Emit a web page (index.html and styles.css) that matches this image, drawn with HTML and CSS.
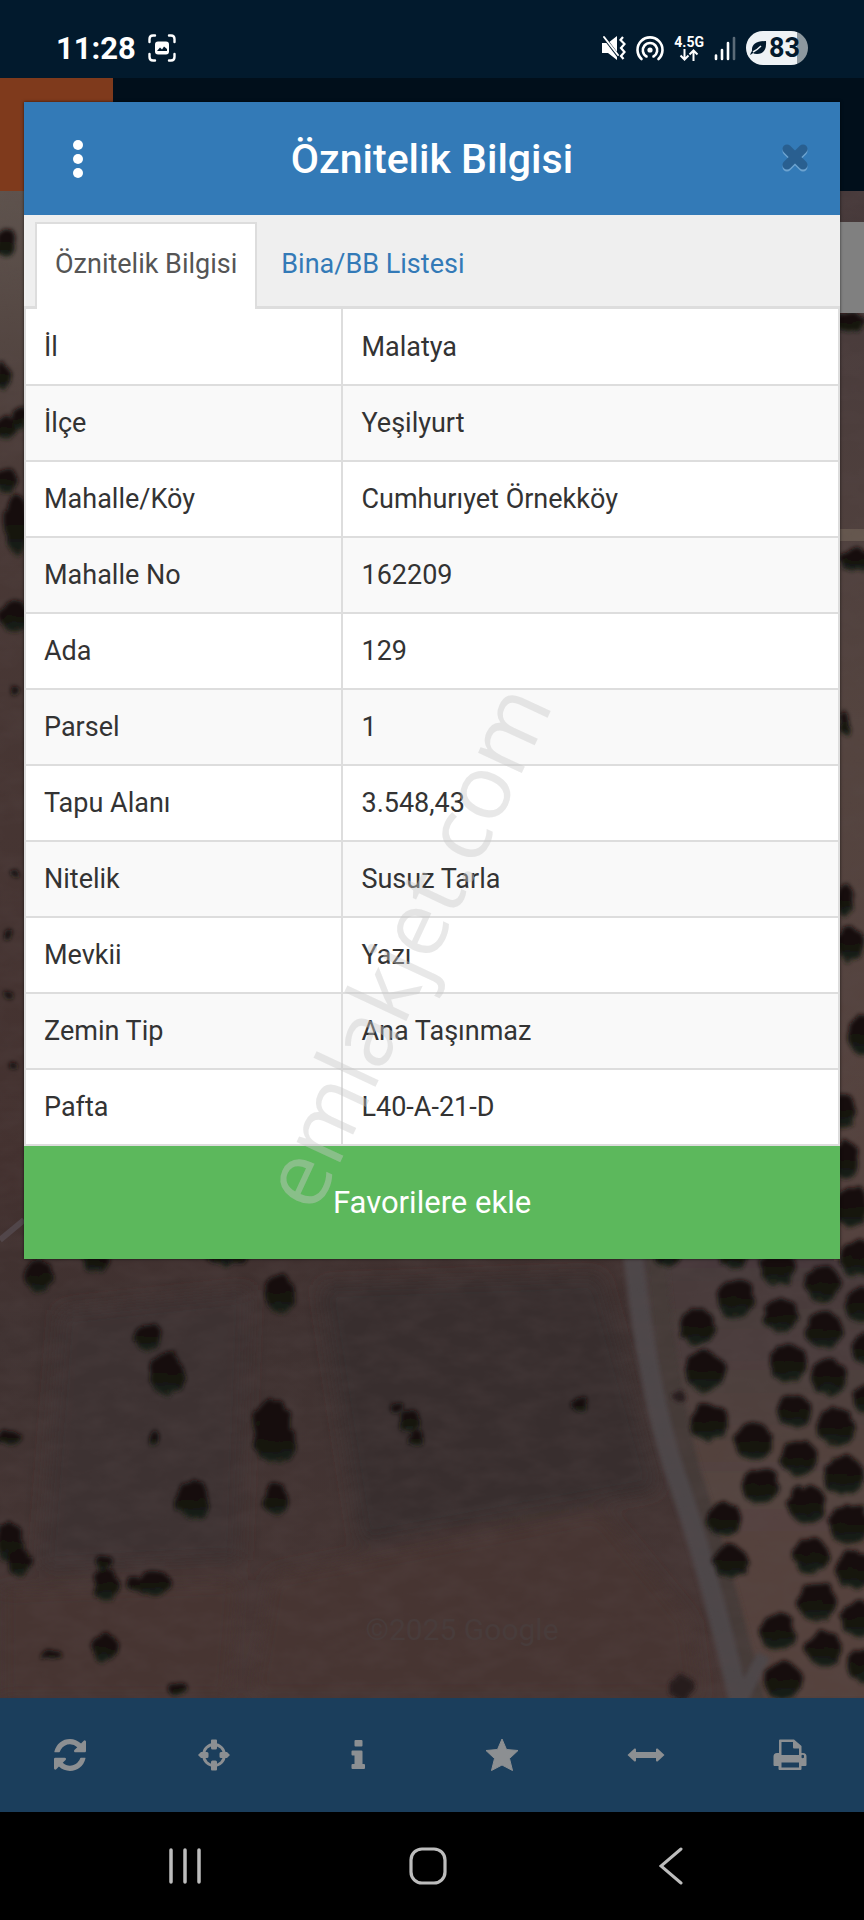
FILE: index.html
```
<!DOCTYPE html>
<html lang="tr">

<head>
  <meta charset="UTF-8">
  <meta name="viewport" content="width=device-width, initial-scale=1.0">
  <title>Öznitelik Bilgisi</title>
  <link rel="stylesheet" href="styles.css">
</head>

<body>
  <div class="status">
    <div class="status-left">
      <span class="time">11:28</span>
      <svg width="28" height="28" viewBox="0 0 28 28" fill="none" stroke="#fff" stroke-width="2.4" stroke-linecap="round">
        <path d="M1.500 8V5Q1.500 1.500 5 1.500H7M21 1.500H23Q26.500 1.500 26.500 5V8M26.500 20V23Q26.500 26.500 23 26.500H21M7 26.500H5Q1.500 26.500 1.500 23V20" />
        <rect x="7" y="7.500" width="14" height="13" rx="3" fill="#fff" stroke="none" />
        <path d="M9 17L12 13.500L14 15.500L16 12.500L19 15V17Z" fill="#021a2d" stroke="none" />
      </svg>
    </div>
    <div class="status-right">
      <svg width="24" height="26" viewBox="0 0 24 26" fill="#fff">
        <path d="M0 8H6L15 1V25L6 18H0Z" />
        <path d="M1 1L17 22" stroke="#021a2d" stroke-width="3" />
        <path d="M2 2L16 20" stroke="#fff" stroke-width="2" stroke-linecap="round" />
        <path d="M21 2L18.500 5L22.500 9L19 13L22.500 17L19 21L21.500 24" fill="none" stroke="#fff" stroke-width="2.200" />
      </svg>
      <svg width="28" height="26" viewBox="0 0 28 26" fill="none" stroke="#fff" stroke-width="2.600" stroke-linecap="round">
        <circle cx="14" cy="15" r="2.600" fill="#fff" stroke="none" />
        <path d="M10.500 21.500A7.200 7.200 0 1 1 17.500 21.500" />
        <path d="M5.500 24A12.500 12.500 0 1 1 22.500 24" />
      </svg>
      <span class="net">
        <span>4.5G</span>
        <svg width="20" height="12" viewBox="0 0 20 12" fill="none" stroke="#fff" stroke-width="2">
          <path d="M5.500 0V10M1.500 6.500L5.500 10.500L9.500 6.500M14.500 12V2M10.500 5.500L14.500 1.500L18.500 5.500" />
        </svg>
      </span>
      <svg width="22" height="26" viewBox="0 0 22 26" stroke="#fff" stroke-width="2.600" stroke-linecap="round">
        <path d="M2 20.500V24M8 15V24M14 8V24" />
        <path d="M20 3V24" stroke="#5b6b78" />
      </svg>
      <span class="battery">
        <svg width="18" height="16" viewBox="0 0 18 16">
          <path d="M1 15Q2 12 3 11Q2 1 17 1Q18 14 8 14Q5 14 4 13Q3 14 1 15Z" fill="#021a2d" />
          <path d="M4 12Q8 10 12 6" fill="none" stroke="#eef2f5" stroke-width="1.500" />
        </svg>
        <span>83</span>
      </span>
    </div>
  </div>

  <div class="topbar">
    <div class="topbar-menu"></div>
  </div>

  <div class="map">
    <svg class="satellite" viewBox="0 191 864 1507" preserveAspectRatio="xMidYMid slice">
      <defs>
        <linearGradient id="soil" x1="0" y1="0" x2="0" y2="1">
          <stop offset="0" stop-color="#5f544e" />
          <stop offset=".2" stop-color="#493936" />
          <stop offset=".65" stop-color="#43312f" />
          <stop offset=".76" stop-color="#3f3231" />
          <stop offset="1" stop-color="#473634" />
        </linearGradient>
        <linearGradient id="orchard" x1="0" y1="0" x2="0" y2="1">
          <stop offset="0" stop-color="#46393a" />
          <stop offset=".5" stop-color="#54443f" />
          <stop offset="1" stop-color="#55423e" />
        </linearGradient>
        <linearGradient id="leaf" x1="0" y1="0" x2="0" y2="1">
          <stop offset="0" stop-color="#140b0a" />
          <stop offset=".6" stop-color="#12130e" />
          <stop offset="1" stop-color="#1d241b" />
        </linearGradient>
        <filter id="rough" x="-5%" y="-5%" width="110%" height="110%">
          <feTurbulence type="fractalNoise" baseFrequency=".09" numOctaves="2" seed="4" />
          <feDisplacementMap in="SourceGraphic" scale="9" xChannelSelector="R" yChannelSelector="G" />
          <feGaussianBlur stdDeviation="2" />
        </filter>
        <filter id="soft" x="-10%" y="-10%" width="120%" height="120%">
          <feGaussianBlur stdDeviation="9" />
        </filter>
        <filter id="edge" x="-50%" y="-5%" width="200%" height="110%">
          <feGaussianBlur stdDeviation="2" />
        </filter>
        <filter id="grain" x="0" y="0" width="100%" height="100%">
          <feTurbulence type="fractalNoise" baseFrequency=".03 .06" numOctaves="3" seed="9" />
          <feColorMatrix values="0 0 0 0 .1  0 0 0 0 .07  0 0 0 0 .07  .8 0 0 0 -.25" />
        </filter>
      </defs>
      <rect y="191" width="864" height="1507" fill="url(#soil)" />

      <!-- fields -->
      <g filter="url(#soft)">
        <path d="M60 1310L250 1290L240 1560L40 1570Z" fill="#3d3233" />
        <path d="M320 1285L600 1275L660 1490L360 1545Z" fill="#392f2e" />
        <path d="M270 1575L600 1510L690 1620L700 1698H250Z" fill="#473533" />
        <path d="M0 1590L240 1580L230 1700H0Z" fill="#473431" />
      </g>
      <path d="M628 1255H870V1700H745L700 1560L655 1400Z" fill="url(#orchard)" filter="url(#edge)" />
      <rect x="834" y="191" width="30" height="1070" fill="url(#orchard)" />
      <path d="M834 535H864" stroke="#66584f" stroke-width="12" />
      <path d="M0 1240L24 1220" stroke="#51464a" stroke-width="6" />

      <!-- road -->
      <g fill="none" filter="url(#edge)">
        <path d="M656 1255Q668 1390 690 1470Q720 1560 756 1705" stroke="#443a38" stroke-width="20" />
        <path d="M633 1255Q648 1390 674 1470Q706 1560 740 1705" stroke="#4e4648" stroke-width="20" />
        <path d="M738 1705L764 1655" stroke="#4e4648" stroke-width="14" />
      </g>
      <rect y="191" width="864" height="1507" filter="url(#grain)" opacity=".5" />

      <!-- single trees -->
      <g fill="url(#leaf)" filter="url(#rough)">
        <ellipse cx="40" cy="1276" rx="14" ry="17" />
        <ellipse cx="95" cy="1261" rx="13" ry="11" />
        <ellipse cx="228" cy="1258" rx="20" ry="7" />
        <ellipse cx="280" cy="1294" rx="15" ry="19" />
        <ellipse cx="148" cy="1337" rx="13" ry="13" />
        <ellipse cx="167" cy="1374" rx="18" ry="21" />
        <ellipse cx="272" cy="1422" rx="19" ry="23" />
        <ellipse cx="275" cy="1442" rx="21" ry="22" />
        <ellipse cx="192" cy="1500" rx="17" ry="19" />
        <ellipse cx="276" cy="1499" rx="12" ry="16" />
        <ellipse cx="9" cy="1438" rx="11" ry="7" />
        <ellipse cx="153" cy="1438" rx="5" ry="8" />
        <ellipse cx="10" cy="1542" rx="13" ry="20" />
        <ellipse cx="20" cy="1563" rx="12" ry="14" />
        <ellipse cx="106" cy="1584" rx="13" ry="17" />
        <ellipse cx="103" cy="1562" rx="8" ry="7" />
        <ellipse cx="133" cy="1584" rx="8" ry="7" />
        <ellipse cx="155" cy="1583" rx="16" ry="12" />
        <ellipse cx="105" cy="1648" rx="13" ry="14" />
        <ellipse cx="51" cy="1655" rx="10" ry="5" />
        <ellipse cx="178" cy="1689" rx="9" ry="6" />
        <ellipse cx="396" cy="1408" rx="5" ry="5" />
        <ellipse cx="410" cy="1421" rx="10" ry="11" />
        <ellipse cx="417" cy="1439" rx="8" ry="8" />
        <ellipse cx="580" cy="1405" rx="8" ry="7" />

        <!-- orchard rows -->
        <circle cx="667" cy="1254" r="12" />
        <circle cx="734" cy="1254" r="15" />
        <circle cx="778" cy="1267" r="18" />
        <circle cx="822" cy="1284" r="18" />
        <circle cx="858" cy="1258" r="18" />
        <circle cx="736" cy="1298" r="19" />
        <circle cx="781" cy="1316" r="17" />
        <circle cx="862" cy="1305" r="17" />
        <circle cx="697" cy="1327" r="18" />
        <circle cx="825" cy="1330" r="19" />
        <circle cx="705" cy="1371" r="20" />
        <circle cx="788" cy="1363" r="19" />
        <circle cx="866" cy="1349" r="16" />
        <circle cx="829" cy="1377" r="18" />
        <circle cx="709" cy="1422" r="19" />
        <circle cx="794" cy="1411" r="17" />
        <circle cx="868" cy="1398" r="15" />
        <circle cx="754" cy="1442" r="19" />
        <circle cx="836" cy="1427" r="19" />
        <circle cx="799" cy="1458" r="18" />
        <circle cx="760" cy="1486" r="18" />
        <circle cx="844" cy="1475" r="20" />
        <circle cx="724" cy="1520" r="17" />
        <circle cx="807" cy="1505" r="19" />
        <circle cx="849" cy="1524" r="20" />
        <circle cx="731" cy="1561" r="17" />
        <circle cx="811" cy="1555" r="18" />
        <circle cx="854" cy="1570" r="19" />
        <circle cx="817" cy="1602" r="19" />
        <circle cx="859" cy="1619" r="18" />
        <circle cx="778" cy="1632" r="18" />
        <circle cx="824" cy="1649" r="18" />
        <circle cx="864" cy="1665" r="17" />
        <circle cx="783" cy="1680" r="19" />
        <circle cx="682" cy="1688" r="12" fill="#261a1c" />
        <circle cx="679" cy="1396" r="5" fill="#261a1c" />

        <!-- behind the window edges -->
        <ellipse cx="6" cy="243" rx="10" ry="14" />
        <ellipse cx="3" cy="376" rx="8" ry="13" />
        <ellipse cx="6" cy="428" rx="12" ry="12" />
        <ellipse cx="20" cy="418" rx="8" ry="12" />
        <ellipse cx="7" cy="480" rx="12" ry="12" />
        <ellipse cx="17" cy="525" rx="13" ry="30" />
        <ellipse cx="14" cy="616" rx="15" ry="15" />
        <ellipse cx="15" cy="692" rx="5" ry="4" />
        <ellipse cx="15" cy="873" rx="5" ry="4" />
        <ellipse cx="8" cy="934" rx="5" ry="4" />
        <ellipse cx="8" cy="996" rx="5" ry="4" />
        <ellipse cx="14" cy="1066" rx="5" ry="4" />
        <ellipse cx="850" cy="322" rx="16" ry="9" />
        <ellipse cx="857" cy="560" rx="18" ry="11" />
        <ellipse cx="845" cy="722" rx="6" ry="12" />
        <ellipse cx="845" cy="900" rx="9" ry="16" />
        <ellipse cx="850" cy="944" rx="14" ry="17" />
        <ellipse cx="863" cy="1035" rx="15" ry="20" />
        <ellipse cx="843" cy="1110" rx="13" ry="17" />
        <ellipse cx="845" cy="1160" rx="13" ry="19" />
        <ellipse cx="852" cy="1208" rx="16" ry="21" />
      </g>
      <text class="credit" x="462" y="1640" text-anchor="middle">©2025 Google</text>
    </svg>
    <div class="side-panel"></div>
  </div>

  <nav class="toolbar">
    <button type="button" aria-label="Yenile">
      <svg width="32" height="32" viewBox="0 0 1536 1536">
        <path d="M1511 928q0 5-1 7-64 268-268 434.500t-478 166.500q-146 0-282.500-55t-243.500-157l-129 129q-19 19-45 19t-45-19-19-45v-448q0-26 19-45t45-19h448q26 0 45 19t19 45-19 45l-137 137q71 66 161 102t187 36q134 0 250-65t186-179q11-17 53-117 8-23 30-23h192q13 0 22.500 9.500t9.500 22.500zm25-800v448q0 26-19 45t-45 19h-448q-26 0-45-19t-19-45 19-45l138-138q-148-137-349-137-134 0-250 65t-186 179q-11 17-53 117-8 23-30 23h-199q-13 0-22.500-9.500t-9.500-22.500v-7q65-268 270-434.500t480-166.500q146 0 284 55.500t245 156.500l130-129q19-19 45-19t45 19 19 45z" />
      </svg>
    </button>
    <button type="button" aria-label="Konum">
      <svg width="32" height="32" viewBox="0 0 32 32">
        <circle cx="16" cy="16" r="10.500" fill="none" stroke="#8c8f92" stroke-width="2.800" />
        <path d="M13 1.500Q13 .5 14 .5H18Q19 .5 19 1.500V9Q19 10.500 17.500 10.500H14.500Q13 10.500 13 9ZM13 30.500Q13 31.500 14 31.500H18Q19 31.500 19 30.500V23Q19 21.500 17.500 21.500H14.500Q13 21.500 13 23ZM0 16L3 13H9Q10.500 13 10.500 14.500V17.500Q10.500 19 9 19H3ZM32 16L29 13H23Q21.500 13 21.500 14.500V17.500Q21.500 19 23 19H29Z" />
      </svg>
    </button>
    <button type="button" aria-label="Bilgi">
      <svg width="14" height="30" viewBox="0 0 14 30">
        <path d="M4.500 0H10.500Q11.500 0 11.500 1V5.500Q11.500 6.500 10.500 6.500H4.500Q3.500 6.500 3.500 5.500V1Q3.500 0 4.500 0ZM1.500 10.500H10.500Q11.500 10.500 11.500 11.500V24H13Q14 24 14 25V28Q14 29 13 29H1.500Q.5 29 .5 28V25Q.5 24 1.500 24H3.500V15.500H1.500Q.5 15.500 .5 14.500V11.500Q.5 10.500 1.500 10.500Z" />
      </svg>
    </button>
    <button type="button" aria-label="Favoriler">
      <svg width="34" height="34" viewBox="0 0 34 34">
        <path d="M17 1L21.500 11.500L33 12.500L24.500 20.500L27.500 32.500L17 27L6.500 32.500L9.500 20.500L1 12.500L12.500 11.500Z" stroke="#8c8f92" stroke-width="1" stroke-linejoin="round" />
      </svg>
    </button>
    <button type="button" aria-label="Ölçüm">
      <svg width="38" height="14" viewBox="0 0 38 14">
        <path d="M.5 7L7.500 .5Q9 .2 9 1.500V4H29V1.500Q29 .2 30.500 .5L37.500 7L30.500 13.500Q29 13.800 29 12.500V10H9V12.500Q9 13.800 7.500 13.500Z" />
      </svg>
    </button>
    <button type="button" aria-label="Yazdır">
      <svg width="34" height="32" viewBox="0 0 34 32">
        <path fill-rule="evenodd" d="M6 1.500Q6 .5 7 .5H21L28.500 7V14H30Q33.500 14 33.500 17.500V26Q33.500 27 32.500 27H28.500V30Q28.500 31 27.500 31H6.500Q5.500 31 5.500 30V27H1.500Q.5 27 .5 26V17.500Q.5 14 4 14H6ZM8.500 3V16H26V9.500H21Q20 9.500 20 8.500V3ZM8.500 23.500V28.500H26V23.500ZM28.500 17.500A1.300 1.300 0 1 0 31 17.500A1.300 1.300 0 1 0 28.500 17.500Z" />
      </svg>
    </button>
  </nav>

  <div class="system-nav">
    <button type="button" aria-label="Son uygulamalar">
      <svg width="36" height="36" viewBox="0 0 36 36" stroke-width="3.500">
        <path d="M4 2V34M18 2V34M32 2V34" />
      </svg>
    </button>
    <button type="button" aria-label="Ana ekran">
      <svg width="38" height="38" viewBox="0 0 38 38" stroke-width="3.200">
        <rect x="2" y="2" width="34" height="34" rx="11" />
      </svg>
    </button>
    <button type="button" aria-label="Geri">
      <svg width="24" height="38" viewBox="0 0 24 38" stroke-width="3">
        <path d="M22 2L2 19L22 36" />
      </svg>
    </button>
  </div>

  <div class="modal" role="dialog" aria-labelledby="modal-title">
    <div class="modal-header">
      <button type="button" class="more" aria-label="Menü">
        <i></i>
        <i></i>
        <i></i>
      </button>
      <h1 id="modal-title">Öznitelik Bilgisi</h1>
      <button type="button" class="close" aria-label="Kapat">
        <svg width="28" height="31" viewBox="0 0 28 31" stroke-width="9" stroke-linecap="round">
          <path d="M6 8L22 24M22 8L6 24" stroke="#6da3d0" />
          <path d="M6 6L22 22M22 6L6 22" stroke="#295f90" />
        </svg>
      </button>
    </div>
    <div class="tabs">
      <a href="#oznitelik" class="active">Öznitelik Bilgisi</a>
      <a href="#bina">Bina/BB Listesi</a>
    </div>
    <table>
      <tbody>
        <tr><th scope="row">İl</th><td>Malatya</td></tr>
        <tr><th scope="row">İlçe</th><td>Yeşilyurt</td></tr>
        <tr><th scope="row">Mahalle/Köy</th><td>Cumhurıyet Örnekköy</td></tr>
        <tr><th scope="row">Mahalle No</th><td>162209</td></tr>
        <tr><th scope="row">Ada</th><td>129</td></tr>
        <tr><th scope="row">Parsel</th><td>1</td></tr>
        <tr><th scope="row">Tapu Alanı</th><td>3.548,43</td></tr>
        <tr><th scope="row">Nitelik</th><td>Susuz Tarla</td></tr>
        <tr><th scope="row">Mevkii</th><td>Yazı</td></tr>
        <tr><th scope="row">Zemin Tip</th><td>Ana Taşınmaz</td></tr>
        <tr><th scope="row">Pafta</th><td>L40-A-21-D</td></tr>
      </tbody>
    </table>
    <button type="button" class="favorite">Favorilere ekle</button>
  </div>

  <div class="watermark">emlakjet.com</div>
</body>

</html>
```
FILE: styles.css
```
* {
  margin: 0;
  padding: 0;
  box-sizing: border-box;
}

body {
  position: relative;
  display: flex;
  flex-direction: column;
  min-height: 100vh;
  overflow-x: hidden;
  background: #000;
  font-family: Roboto, "Noto Sans", sans-serif;
  font-size: 27px;
  color: #333;
}

button {
  border: 0;
  background: none;
  font-family: inherit;
  cursor: pointer;
}

svg {
  display: block;
  flex-shrink: 0;
}

/* status bar */
.status {
  height: 78px;
  padding: 20px 56px 0;
  display: flex;
  justify-content: space-between;
  background: #021a2d;
  color: #fff;
}

.status-left,
.status-right {
  height: 58px;
  display: flex;
  align-items: center;
  padding-bottom: 2px;
}

.status-left {
  gap: 12px;
}

.status-right {
  gap: 10px;
}

.time {
  font-size: 31px;
  font-weight: 700;
}

.net {
  display: flex;
  flex-direction: column;
  align-items: center;
  font-size: 14px;
  line-height: 14px;
  font-weight: 700;
}

.battery {
  width: 62px;
  height: 34px;
  border-radius: 17px;
  display: flex;
  align-items: center;
  padding-left: 3px;
  gap: 2px;
  background: linear-gradient(90deg, #eef2f5 83%, #8d989f 83%);
  color: #021a2d;
  font-size: 27px;
  font-weight: 700;
}

/* map page behind the window */
.topbar {
  height: 113px;
  background: #010f1b;
}

.topbar-menu {
  width: 113px;
  height: 113px;
  background: #7f3a1c;
}

.map {
  position: relative;
  flex: 1;
  background: #43312f;
  overflow: hidden;
}

.satellite {
  position: absolute;
  width: 100%;
  height: 100%;
}

.credit {
  font-size: 30px;
  fill: #483c3b;
}

.side-panel {
  width: 26px;
  height: 91px;
  margin: 31px 0 0 auto;
  position: relative;
  background: #808080;
}

.toolbar {
  height: 114px;
  display: grid;
  grid-template-columns: repeat(6, 1fr);
  background: #1b3e5c;
}

.toolbar button {
  padding-right: 4px;
  display: flex;
  align-items: center;
  justify-content: center;
}

.toolbar svg {
  fill: #8c8f92;
}

.system-nav {
  height: 108px;
  padding: 0 72px 0 64px;
  display: grid;
  grid-template-columns: repeat(3, 1fr);
  background: #000;
}

.system-nav button {
  display: flex;
  align-items: center;
  justify-content: center;
}

.system-nav svg {
  fill: none;
  stroke: #bdbdbd;
  stroke-linecap: round;
}

/* attribute window */
.modal {
  position: absolute;
  top: 102px;
  left: 24px;
  right: 24px;
  background: #fff;
  box-shadow: 0 0 3px rgba(0, 0, 0, .6);
}

.modal-header {
  height: 113px;
  padding: 0 31px;
  display: flex;
  align-items: center;
  justify-content: space-between;
  background: #337ab7;
  color: #fff;
}

.modal-header h1 {
  font-size: 41px;
  font-weight: 500;
}

.more,
.close {
  width: 46px;
  display: flex;
}

.more {
  flex-direction: column;
  align-items: center;
  gap: 4px;
}

.close {
  justify-content: flex-end;
}

.more i {
  width: 10px;
  height: 10px;
  border-radius: 50%;
  background: #fff;
}

.tabs {
  height: 94px;
  padding: 7px 11px 0;
  display: flex;
  gap: 4px;
  background: #efefef;
  border-bottom: 3px solid #ddd;
}

.tabs a {
  height: 84px;
  padding: 0 18px;
  line-height: 80px;
  border: 2px solid transparent;
  border-bottom: 0;
  color: #337ab7;
  text-decoration: none;
}

.tabs a.active {
  height: 87px;
  background: #fff;
  border-color: #ddd;
  color: #555;
}

table {
  width: 100%;
  border-collapse: collapse;
}

tr {
  height: 76px;
}

tr:nth-child(even) {
  background: #f9f9f9;
}

th,
td {
  padding: 0 18px;
  border: 2px solid #ddd;
  text-align: left;
  font-weight: 400;
}

tr:first-child th,
tr:first-child td {
  border-top: 0;
}

th {
  width: 39%;
}

.favorite {
  width: 100%;
  height: 113px;
  display: block;
  background: #5cb85c;
  color: #fff;
  font-size: 31px;
}

.watermark {
  position: absolute;
  top: 945px;
  left: 403px;
  transform: translate(-50%, -50%) rotate(-65deg);
  font-family: "Open Sans", sans-serif;
  font-size: 90px;
  line-height: 100px;
  color: rgba(200, 200, 200, .42);
  pointer-events: none;
}
```
